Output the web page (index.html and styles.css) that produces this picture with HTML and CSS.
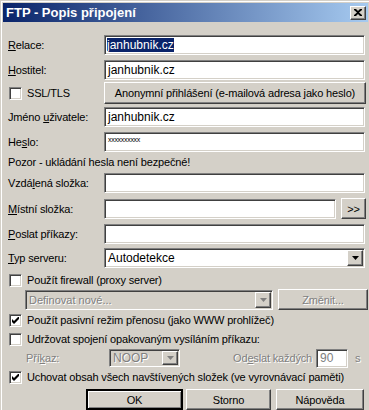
FILE: index.html
```html
<!DOCTYPE html>
<html lang="cs">
<head>
    <meta charset="UTF-8">
    <title>FTP - Popis připojení</title>
    <link rel="stylesheet" href="styles.css">
</head>
<body>
    <div class="window">
        <div class="titlebar">
            <span class="title">FTP - Popis připojení</span>
            <span class="close-btn">
                <svg width="8" height="7" viewBox="0 0 8 7"><path d="M0 0h2l2 2 2-2h2v1L5 3.5 8 6v1H6L4 5 2 7H0V6l3-2.5L0 1z" fill="#000"/></svg>
            </span>
        </div>

        <div class="content">
            <div class="row r-relace">
                <label class="lbl"><u>R</u>elace:</label>
                <div class="field wide"><span class="sel">janhubnik.cz</span></div>
            </div>
            <div class="row r-gap5">
                <label class="lbl"><u>H</u>ostitel:</label>
                <div class="field wide">janhubnik.cz</div>
            </div>
            <div class="row r-ssl">
                <div class="check-lbl lbl"><span class="check"></span>SSL/TLS</div>
                <div class="btn anon">Anonymní přihlášení (e-mailová adresa jako heslo)</div>
            </div>
            <div class="row r-gap3">
                <label class="lbl">Jméno <u>u</u>živatele:</label>
                <div class="field wide">janhubnik.cz</div>
            </div>
            <div class="row r-gap5">
                <label class="lbl">He<u>s</u>lo:</label>
                <div class="field wide pass">xxxxxxxxxx</div>
            </div>
            <div class="row r-note">Pozor - ukládání hesla není bezpečné!</div>
            <div class="row r-gap3">
                <label class="lbl">Vzdá<u>l</u>ená složka:</label>
                <div class="field wide"></div>
            </div>
            <div class="row r-gap5">
                <label class="lbl"><u>M</u>ístní složka:</label>
                <div class="field local"></div>
                <div class="btn browse">&gt;&gt;</div>
            </div>
            <div class="row r-gap5">
                <label class="lbl"><u>P</u>oslat příkazy:</label>
                <div class="field wide"></div>
            </div>
            <div class="row r-gap4">
                <label class="lbl"><u>T</u>yp serveru:</label>
                <div class="field wide combo">
                    <span class="combo-text">Autodetekce</span>
                    <span class="btn arrow"><svg width="7" height="4" viewBox="0 0 7 4"><path d="M0 0h7L3.5 4z" fill="#000"/></svg></span>
                </div>
            </div>
            <div class="row r-check r-gap4">
                <span class="check"></span>Použít firewall (proxy server)
            </div>
            <div class="row r-proxy">
                <div class="field combo proxy disabled">
                    <span class="combo-text">Definovat nové...</span>
                    <span class="btn arrow"><svg width="7" height="4" viewBox="0 0 7 4"><path d="M0 0h7L3.5 4z" fill="#808080"/></svg></span>
                </div>
                <div class="btn change disabled">Změnit...</div>
            </div>
            <div class="row r-check r-gap2">
                <span class="check checked"><svg width="7" height="7" viewBox="0 0 7 7"><path d="M0 2l2 2 5-5v3L2 7 0 5z" fill="#000"/></svg></span>Použít pasivní režim přenosu (jako WWW prohlížeč)
            </div>
            <div class="row r-check r-gap3">
                <span class="check"></span>Udržovat spojení opakovaným vysíláním příkazu:
            </div>
            <div class="row r-keep">
                <span class="lbl-dis cmd-lbl">Pří<u>k</u>az:</span>
                <div class="field combo noop disabled">
                    <span class="combo-text">NOOP</span>
                    <span class="btn arrow"><svg width="7" height="4" viewBox="0 0 7 4"><path d="M0 0h7L3.5 4z" fill="#808080"/></svg></span>
                </div>
                <span class="lbl-dis every">Od<u>e</u>slat každých</span>
                <div class="field secs">90</div>
                <span class="lbl-dis unit">s</span>
            </div>
            <div class="row r-check r-gap2">
                <span class="check checked"><svg width="7" height="7" viewBox="0 0 7 7"><path d="M0 2l2 2 5-5v3L2 7 0 5z" fill="#000"/></svg></span>Uchovat obsah všech navštívených složek (ve vyrovnávací paměti)
            </div>
            <div class="row buttons">
                <div class="btn default">OK</div>
                <div class="btn storno">Storno</div>
                <div class="btn help">Nápověda</div>
            </div>
        </div>
    </div>
</body>
</html>
```

FILE: styles.css
```css
body {
    margin: 0;
    background-color: #d4d0c8;
    font-family: "Liberation Sans", Arial, sans-serif;
    font-size: 11px;
    letter-spacing: -0.15px;
    color: #000;
    white-space: nowrap;
}

.window {
    width: 369px;
    height: 410px;
    box-sizing: border-box;
    border-top: 1px solid #d4d0c8;
    border-left: 1px solid #d4d0c8;
    box-shadow: inset 1px 1px 0 #fff;
    padding: 2px 0 0 2px;
    overflow: hidden;
}

.titlebar {
    height: 19px;
    margin-right: 1px;
    display: flex;
    align-items: center;
    justify-content: space-between;
    padding: 0 2px 0 3px;
    background: linear-gradient(to right, #0a246a, #a6caf0);
    color: #fff;
}

.title {
    font-weight: bold;
    font-size: 13px;
    letter-spacing: 0;
}

.close-btn {
    width: 14px;
    height: 12px;
    display: flex;
    align-items: center;
    justify-content: center;
    background-color: #d4d0c8;
    border: 1px solid;
    border-color: #fff #404040 #404040 #fff;
    box-shadow: inset -1px -1px 0 #808080;
}

.content {
    padding-left: 5px;
}

.row {
    display: flex;
    align-items: center;
}

.lbl {
    width: 96px;
    flex: none;
}

.field {
    height: 20px;
    box-sizing: border-box;
    border: 1px solid;
    border-color: #808080 #fff #fff #808080;
    box-shadow: inset 1px 1px 0 #404040, inset -1px -1px 0 #d4d0c8;
    background-color: #fff;
    padding: 0 3px;
    display: flex;
    align-items: center;
    font-size: 12px;
    letter-spacing: 0;
}

.wide {
    width: 261px;
}

.sel {
    background-color: #0a246a;
    color: #fff;
    margin-left: -1px;
}

.pass {
    font-size: 7px;
    align-items: flex-start;
    padding-top: 3px;
    letter-spacing: -0.3px;
}

.btn {
    box-sizing: border-box;
    border: 1px solid;
    border-color: #fff #404040 #404040 #fff;
    box-shadow: inset -1px -1px 0 #808080;
    background-color: #d4d0c8;
    display: flex;
    align-items: center;
    justify-content: center;
    font-size: 11px;
}

.disabled {
    color: #808080;
    text-shadow: 1px 1px 0 #fff;
}

.field.disabled {
    background-color: #d4d0c8;
}

.r-relace {
    margin-top: 13px;
}

.r-gap2 { margin-top: 2px; }
.r-gap3 { margin-top: 3px; }
.r-gap4 { margin-top: 4px; }
.r-gap5 { margin-top: 5px; }

.r-ssl {
    margin-top: 2px;
}

.check-lbl {
    display: flex;
    align-items: center;
}

.check {
    width: 13px;
    height: 13px;
    box-sizing: border-box;
    flex: none;
    border: 1px solid;
    border-color: #808080 #fff #fff #808080;
    box-shadow: inset 1px 1px 0 #404040, inset -1px -1px 0 #d4d0c8;
    background-color: #fff;
    margin: 0 5px 0 1px;
    display: flex;
    align-items: center;
    justify-content: center;
}

.anon {
    width: 262px;
    height: 22px;
}

.r-note {
    margin-top: 2px;
    height: 16px;
}

.local {
    width: 232px;
}

.browse {
    width: 25px;
    height: 21px;
    margin-left: 5px;
}

.combo {
    padding-right: 1px;
    justify-content: space-between;
}

.arrow {
    width: 16px;
    height: 16px;
    font-size: 0;
}

.r-check {
    height: 16px;
}

.r-proxy {
    margin-top: 1px;
    padding-left: 17px;
}

.proxy {
    width: 248px;
    font-size: 11px;
}

.change {
    width: 90px;
    height: 21px;
    margin-left: 5px;
}

.r-keep {
    margin-top: 2px;
    height: 18px;
}

.lbl-dis {
    color: #808080;
    text-shadow: 1px 1px 0 #fff;
}

.cmd-lbl {
    width: 83px;
    margin-left: 18px;
}

.noop {
    width: 71px;
    height: 18px;
}

.noop .arrow {
    height: 14px;
}

.every {
    margin-left: 53px;
}

.secs {
    width: 32px;
    height: 19px;
    margin-left: 4px;
    color: #808080;
}

.unit {
    margin-left: 7px;
}

.buttons {
    margin-top: 4px;
    padding-left: 78px;
}

.buttons .btn {
    height: 21px;
}

.default {
    width: 97px;
    border-width: 2px;
    border-color: #000;
    box-shadow: inset 1px 1px 0 #fff, inset -1px -1px 0 #808080;
}

.storno {
    width: 85px;
    margin-left: 3px;
}

.help {
    width: 88px;
    margin-left: 5px;
}
```
